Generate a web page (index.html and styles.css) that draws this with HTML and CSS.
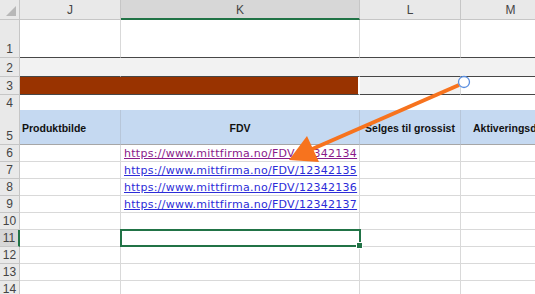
FILE: index.html
```html
<!DOCTYPE html>
<html lang="no">
  <head>
    <meta charset="UTF-8" />
    <meta name="viewport" content="width=device-width, initial-scale=1.0" />
    <title>FDV-lenker</title>
    <link rel="stylesheet" href="styles.css">
  </head>
  <body>
    <div class="sheet">
      <div class="row row-head">
        <div class="corner"><span class="tri"></span></div>
        <div class="colhead">J</div>
        <div class="colhead active">K</div>
        <div class="colhead">L</div>
        <div class="colhead">M</div>
      </div>

      <div class="row row-1">
        <div class="rowhead">1</div>
        <div class="cell edge-bottom"></div>
        <div class="cell edge-bottom"></div>
        <div class="cell edge-bottom"></div>
        <div class="cell edge-bottom"></div>
      </div>

      <div class="row row-2">
        <div class="rowhead">2</div>
        <div class="cell grey edge-bottom no-side"></div>
        <div class="cell grey edge-bottom no-side"></div>
        <div class="cell grey edge-bottom no-side"></div>
        <div class="cell grey edge-bottom no-side"></div>
      </div>

      <div class="row row-3">
        <div class="rowhead">3</div>
        <div class="cell brown span-2 edge-bottom"></div>
        <div class="cell grey edge-bottom"></div>
        <div class="cell edge-bottom no-side"></div>
      </div>

      <div class="row row-4">
        <div class="rowhead">4</div>
        <div class="cell edge-heavy no-side"></div>
        <div class="cell edge-heavy no-side"></div>
        <div class="cell edge-heavy no-side"></div>
        <div class="cell edge-heavy no-side"></div>
      </div>

      <div class="row row-5">
        <div class="rowhead">5</div>
        <div class="cell blue th left">Produktbilde</div>
        <div class="cell blue th">FDV</div>
        <div class="cell blue th">Selges til grossist</div>
        <div class="cell blue th left clip">Aktiveringsdato</div>
      </div>

      <div class="row">
        <div class="rowhead">6</div>
        <div class="cell"></div>
        <div class="cell"><a class="link visited" href="#">https://www.mittfirma.no/FDV/12342134</a></div>
        <div class="cell"></div>
        <div class="cell"></div>
      </div>
      <div class="row">
        <div class="rowhead">7</div>
        <div class="cell"></div>
        <div class="cell"><a class="link" href="#">https://www.mittfirma.no/FDV/12342135</a></div>
        <div class="cell"></div>
        <div class="cell"></div>
      </div>
      <div class="row">
        <div class="rowhead">8</div>
        <div class="cell"></div>
        <div class="cell"><a class="link" href="#">https://www.mittfirma.no/FDV/12342136</a></div>
        <div class="cell"></div>
        <div class="cell"></div>
      </div>
      <div class="row">
        <div class="rowhead">9</div>
        <div class="cell"></div>
        <div class="cell"><a class="link" href="#">https://www.mittfirma.no/FDV/12342137</a></div>
        <div class="cell"></div>
        <div class="cell"></div>
      </div>
      <div class="row">
        <div class="rowhead">10</div>
        <div class="cell"></div>
        <div class="cell"></div>
        <div class="cell"></div>
        <div class="cell"></div>
      </div>
      <div class="row">
        <div class="rowhead active">11</div>
        <div class="cell"></div>
        <div class="cell selected"><span class="handle"></span></div>
        <div class="cell"></div>
        <div class="cell"></div>
      </div>
      <div class="row">
        <div class="rowhead">12</div>
        <div class="cell"></div>
        <div class="cell"></div>
        <div class="cell"></div>
        <div class="cell"></div>
      </div>
      <div class="row">
        <div class="rowhead">13</div>
        <div class="cell"></div>
        <div class="cell"></div>
        <div class="cell"></div>
        <div class="cell"></div>
      </div>
      <div class="row">
        <div class="rowhead">14</div>
        <div class="cell"></div>
        <div class="cell"></div>
        <div class="cell"></div>
        <div class="cell"></div>
      </div>

      <!-- annotation arrow drawn over the sheet -->
      <svg class="arrow" width="535" height="294" viewBox="0 0 535 294">
        <line x1="459" y1="85" x2="310" y2="150" stroke="#f7731e" stroke-width="4" />
        <polygon points="289,160 319,162 307,136" fill="#f7731e" />
        <circle cx="464" cy="82" r="5.5" fill="#fff" stroke="#5b8fe0" stroke-width="1.3" />
      </svg>
    </div>
  </body>
</html>
```

FILE: styles.css
```css
body {
  margin: 0;
  background-color: #fff;
  font-family: 'Liberation Sans', Arial, sans-serif;
}
.sheet {
  position: relative;
  width: 535px;
  height: 294px;
  overflow: hidden;
}
.row {
  display: grid;
  grid-template-columns: 20px 101px 239px 101px 100px;
  height: 17px;
}
.row-head { height: 20px; }
.row-1 { height: 38px; }
.row-2 { height: 19px; }
.row-3 { height: 18px; }
.row-4 { height: 15px; }
.row-5 { height: 35px; }

.corner,
.colhead,
.rowhead {
  box-sizing: border-box;
  background-color: #e9e9e9;
  color: #444;
  font-size: 12px;
  border-right: 1px solid #c6c6c6;
  border-bottom: 1px solid #c6c6c6;
}
.corner {
  position: relative;
}
.corner .tri {
  position: absolute;
  right: 3px;
  bottom: 3px;
  width: 0;
  height: 0;
  border-left: 10px solid transparent;
  border-bottom: 10px solid #b8b8b8;
}
.colhead {
  display: flex;
  align-items: center;
  justify-content: center;
  padding-top: 1px;
}
.colhead.active {
  background-color: #d7d7d7;
  border-bottom: 2px solid #217346;
}
.rowhead {
  display: flex;
  align-items: flex-end;
  justify-content: center;
  line-height: 16px;
}
.rowhead.active {
  background-color: #d7d7d7;
  border-right: 2px solid #217346;
}

.cell {
  box-sizing: border-box;
  position: relative;
  border-right: 1px solid #d9d9d9;
  border-bottom: 1px solid #d9d9d9;
  white-space: nowrap;
  font-size: 11px;
}
.no-side { border-right-color: transparent; }
.edge-bottom { border-bottom: 1px solid #474747; }
.edge-heavy { border-bottom: 2px solid #6a6a6a; }
.grey { background-color: #f2f2f2; }
.brown { background-color: #993300; border-right: 2px solid #fff; }
.span-2 { grid-column: span 2; }
.blue { background-color: #c5d9f1; border-right-color: #b7c6d9; border-bottom-color: #a6a6a6; }

.th {
  display: flex;
  align-items: center;
  justify-content: center;
  font-weight: bold;
  font-size: 10.5px;
  color: #111;
  padding-top: 1px;
}
.th.left {
  justify-content: flex-start;
  padding-left: 2px;
}
.clip {
  overflow: hidden;
  padding-left: 12px !important;
}

.link {
  display: block;
  padding: 1px 0 0 3px;
  font-family: 'DejaVu Sans', Verdana, sans-serif;
  font-size: 11px;
  letter-spacing: 0.28px;
  line-height: 15px;
  color: #2c2cd8;
}
.link.visited { color: #8a1a8a; }

.selected {
  border: 2px solid #217346;
  margin: -1px 0 0 -1px;
  width: 241px;
  height: 18px;
  z-index: 1;
}
.handle {
  position: absolute;
  right: -4px;
  bottom: -4px;
  width: 5px;
  height: 5px;
  background-color: #217346;
  border: 1px solid #fff;
}

.arrow {
  position: absolute;
  left: 0;
  top: 0;
  pointer-events: none;
}
```
